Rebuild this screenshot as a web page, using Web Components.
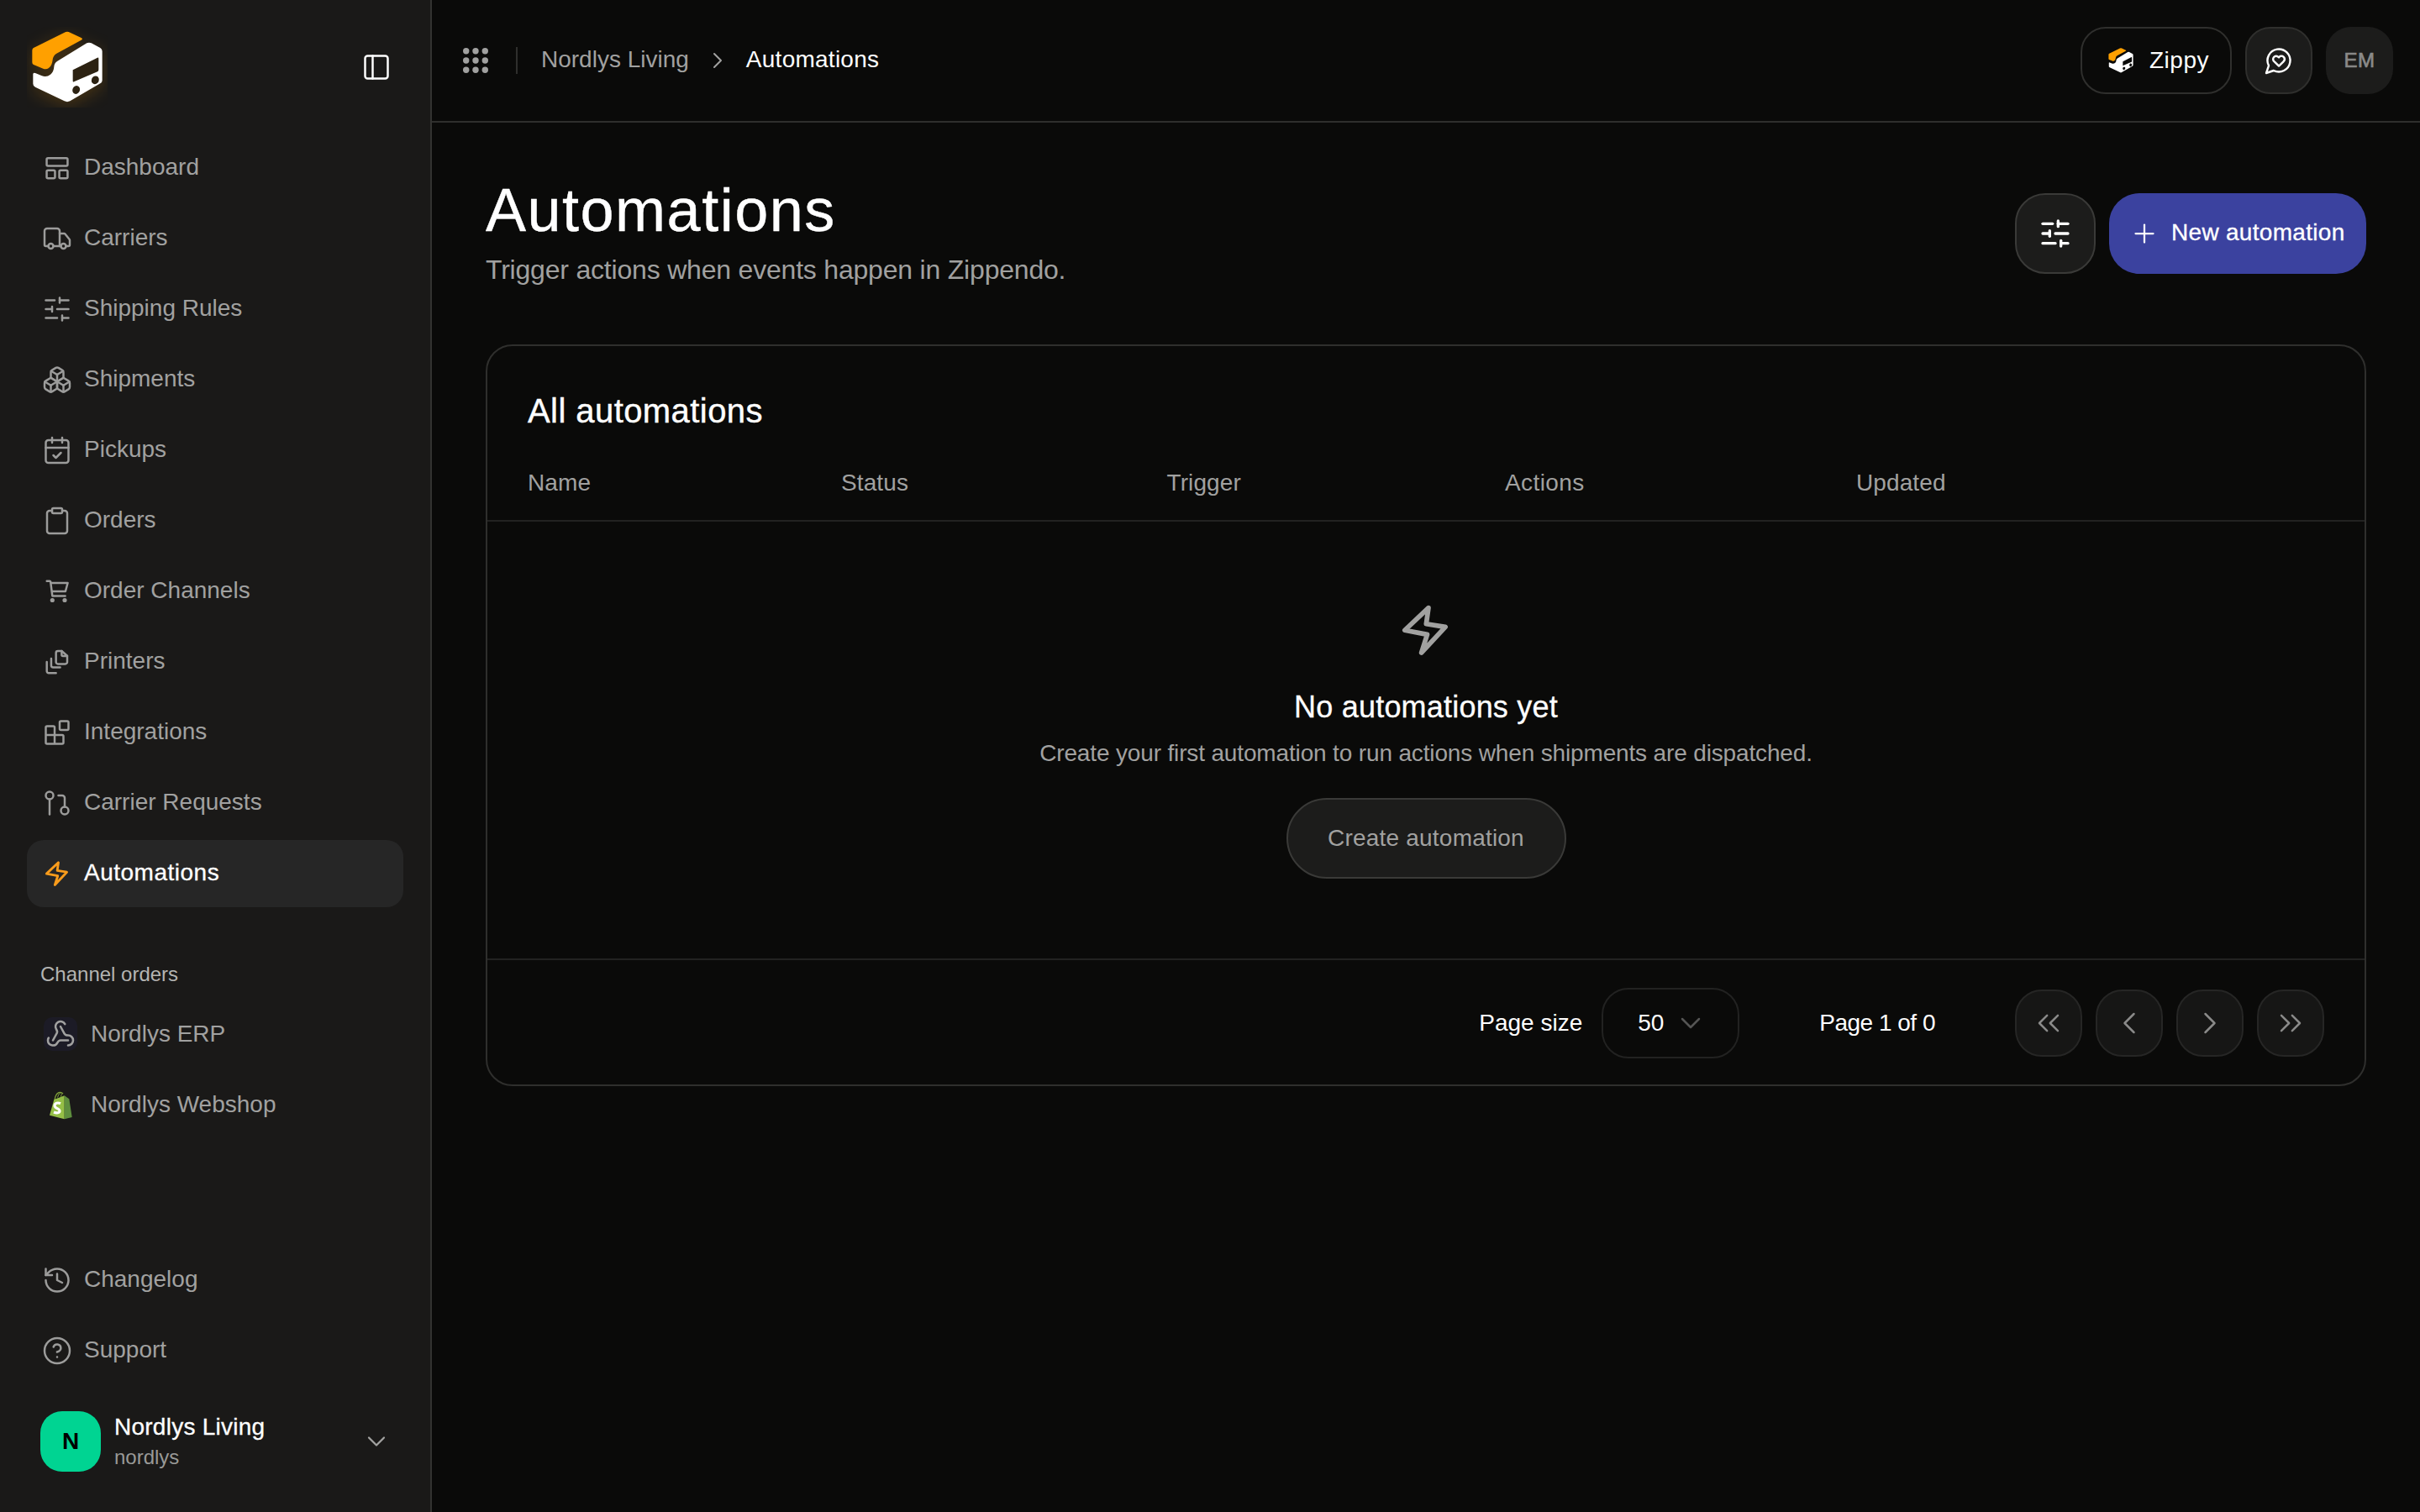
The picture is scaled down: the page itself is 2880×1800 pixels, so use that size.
<!DOCTYPE html>
<html lang="en"><head><meta charset="utf-8"><title>Automations</title>
<style>
html,body{margin:0;padding:0;background:#0a0a09;font-family:"Liberation Sans",Arial,sans-serif;color:#fff;height:100%;overflow:hidden}
</style></head><body>
<app-shell>
  <side-bar slot="side">
    <nav-item icon="dashboard">Dashboard</nav-item>
    <nav-item icon="truck">Carriers</nav-item>
    <nav-item icon="sliders">Shipping Rules</nav-item>
    <nav-item icon="boxes">Shipments</nav-item>
    <nav-item icon="calcheck">Pickups</nav-item>
    <nav-item icon="clipboard">Orders</nav-item>
    <nav-item icon="cart">Order Channels</nav-item>
    <nav-item icon="files">Printers</nav-item>
    <nav-item icon="blocks">Integrations</nav-item>
    <nav-item icon="pull">Carrier Requests</nav-item>
    <nav-item icon="bolt" active>Automations</nav-item>
    <channel-item slot="channels" kind="webhook">Nordlys ERP</channel-item>
    <channel-item slot="channels" kind="shopify">Nordlys Webshop</channel-item>
    <nav-item slot="bottom" icon="history">Changelog</nav-item>
    <nav-item slot="bottom" icon="help">Support</nav-item>
  </side-bar>
  <top-bar slot="top"></top-bar>
  <page-head slot="main"></page-head>
  <automation-card slot="main"></automation-card>
</app-shell>
<script>
const P={
dashboard:'<rect x="3.7" y="4.200" width="16.600" height="6.200" rx="1"/><rect x="3.7" y="13.800" width="6.600" height="6.400" rx="1"/><rect x="13.700" y="13.800" width="6.600" height="6.400" rx="1"/>',
truck:'<path d="M14 18V6a2 2 0 0 0-2-2H4a2 2 0 0 0-2 2v11a1 1 0 0 0 1 1h2"/><path d="M15 18H9"/><path d="M19 18h2a1 1 0 0 0 1-1v-3.650a1 1 0 0 0-.22-.624l-3.480-4.350A1 1 0 0 0 17.520 8H14"/><circle cx="17" cy="18" r="2"/><circle cx="7" cy="18" r="2"/>',
sliders:'<path d="M10 5H3"/><path d="M12 19H3"/><path d="M14 3v4"/><path d="M16 17v4"/><path d="M21 12h-9"/><path d="M21 19h-5"/><path d="M21 5h-7"/><path d="M8 10v4"/><path d="M8 12H3"/>',
boxes:'<path d="M2.970 12.920A2 2 0 0 0 2 14.630v3.240a2 2 0 0 0 .97 1.710l3 1.800a2 2 0 0 0 2.060 0L12 19v-5.500l-5-3-4.030 2.420Z"/><path d="m7 16.500-4.740-2.850"/><path d="m7 16.500 5-3"/><path d="M7 16.500v5.170"/><path d="M12 13.500V19l3.970 2.380a2 2 0 0 0 2.060 0l3-1.800a2 2 0 0 0 .97-1.710v-3.240a2 2 0 0 0-.97-1.710L17 10.500l-5 3Z"/><path d="m17 16.500-5-3"/><path d="m17 16.500 4.740-2.850"/><path d="M17 16.500v5.170"/><path d="M7.970 4.420A2 2 0 0 0 7 6.130v4.370l5 3 5-3V6.130a2 2 0 0 0-.97-1.710l-3-1.800a2 2 0 0 0-2.060 0l-3 1.800Z"/><path d="M12 8 7.260 5.150"/><path d="m12 8 4.740-2.850"/><path d="M12 13.500V8"/>',
calcheck:'<path d="M8 2v4"/><path d="M16 2v4"/><rect width="18" height="18" x="3" y="4" rx="2"/><path d="M3 10h18"/><path d="m9 16 2 2 4-4"/>',
clipboard:'<rect width="8" height="4" x="8" y="2" rx="1"/><path d="M16 4h2a2 2 0 0 1 2 2v14a2 2 0 0 1-2 2H6a2 2 0 0 1-2-2V6a2 2 0 0 1 2-2h2"/>',
cart:'<circle cx="8.200" cy="19" r=".9" fill="currentColor"/><circle cx="18" cy="19" r=".9" fill="currentColor"/><path d="M3.800 3.800H6a.8.8 0 0 1 .8.7L8.200 15.600H18.400"/><path d="M7.200 5.300H20.400L18.600 12H8"/>',
files:'<path d="M11.100 4.800a1.500 1.500 0 0 1 1.500-1.500h3L20 7.200v4.900a1.500 1.500 0 0 1-1.500 1.500h-5.900a1.500 1.500 0 0 1-1.500-1.500z"/><path d="M15.600 3.300v3a1 1 0 0 0 1 1H20"/><path d="M7.300 9.300v5.600a1.500 1.500 0 0 0 1.500 1.500h5.600"/><path d="M3.800 12v7.400a1.500 1.500 0 0 0 1.500 1.500h5.800"/>',
blocks:'<rect width="7" height="7" x="14" y="3" rx="1"/><path d="M10 21V8a1 1 0 0 0-1-1H4a1 1 0 0 0-1 1v12a1 1 0 0 0 1 1h12a1 1 0 0 0 1-1v-5a1 1 0 0 0-1-1H3"/>',
pull:'<circle cx="18" cy="18" r="3"/><circle cx="6" cy="6" r="3"/><path d="M13 6h3a2 2 0 0 1 2 2v7"/><path d="M6 9v12"/>',
bolt:'<path d="M13 3.200 3.600 12.100 12.500 13.800 10.200 21 19.700 10.800 12.100 9.600Z"/>',
history:'<path d="M3 12a9 9 0 1 0 9-9 9.750 9.750 0 0 0-6.740 2.740L3 8"/><path d="M3 3v5h5"/><path d="M12 7v5l4 2"/>',
help:'<circle cx="12" cy="12" r="10"/><path d="M9.090 9a3 3 0 0 1 5.830 1c0 2-3 3-3 3"/><path d="M12 17h.01"/>',
webhook:'<path d="M18 16.980h-5.990c-1.100 0-1.950.94-2.480 1.900A4 4 0 0 1 2 17c.01-.7.2-1.400.57-2"/><path d="m6 17 3.130-5.780c.53-.97.1-2.180-.5-3.100a4 4 0 1 1 6.890-4.060"/><path d="m12 6 3.130 5.730C15.660 12.700 16.900 13 18 13a4 4 0 0 1 0 8"/>',
panel:'<rect width="18" height="18" x="3" y="3" rx="2"/><path d="M9 3v18"/>',
down:'<path d="m6 9 6 6 6-6"/>',right:'<path d="m9 18 6-6-6-6"/>',left:'<path d="m15 18-6-6 6-6"/>',
dleft:'<path d="m11 17-5-5 5-5"/><path d="m18 17-5-5 5-5"/>',dright:'<path d="m6 17 5-5-5-5"/><path d="m13 17 5-5-5-5"/>',
plus:'<path d="M5 12h14"/><path d="M12 5v14"/>',
heart:'<path d="M7.900 20A9 9 0 1 0 4 16.100L2 22Z"/><path d="M15.800 9.200a2.500 2.500 0 0 0-3.500 0l-.3.4-.35-.3a2.420 2.420 0 1 0-3.200 3.600l3.600 3.500 3.600-3.500c1.200-1.200 1.100-2.700.2-3.700"/>'
};
const ic=(n,s,c='currentColor',w=1.65)=>`<svg width="${s}" height="${s}" viewBox="0 0 24 24" fill="none" stroke="${c}" stroke-width="${w}" stroke-linecap="round" stroke-linejoin="round" style="flex:none;display:block;color:${c}">${P[n]}</svg>`;
const logo=(s,dark='#2c2212')=>`<svg width="${s}" height="${s}" viewBox="0 0 360 360" style="flex:none;display:block"><path d="M66 108 170 56q10-5 20 0l40 19q8 4 0 8l-88 48q-12 7-14 22-2 22-14 30-9 6-20 2l-34-14q-5-2-5-8v-43q0-9 11-12z" fill="#ffa000"/><path d="M250 94q8-4 16 0l32 17q7 4 7 12v104q0 7-7 11L190 301q-10 5-20 0L66 251q-8-4-8-12v-34q0-7 8-4l22 9q18 7 32-4 12-9 13-28 1-14 12-20z" fill="#fff"/><path d="M200 190 288 146q4-2 4 3v40q0 5-4 7l-84 36q-4 2-4-3z" fill="${dark}"/><ellipse cx="212" cy="261" rx="13" ry="15" transform="rotate(25 212 261)" fill="${dark}"/><ellipse cx="280" cy="226" rx="13" ry="15" transform="rotate(25 280 226)" fill="${dark}"/></svg>`;
function def(name,html){
  class C extends HTMLElement{
    constructor(){super();const r=this.attachShadow({mode:'open'});const t=document.createElement('template');t.innerHTML=typeof html==='function'?html(this):html;r.appendChild(t.content.cloneNode(true));}
  }
  customElements.define(name,C);
}
def('app-shell',`<style>:host{display:grid;grid-template-columns:514px 1fr;grid-template-rows:146px 1fr;width:100%;height:1800px}
.s{grid-row:1/3;min-height:0;display:flex}.m{display:flex;flex-direction:column;padding:64px 64px 0;min-width:0}</style>
<div class="s"><slot name="side"></slot></div><div><slot name="top"></slot></div><div class="m"><slot name="main"></slot></div>`);
def('side-bar',()=>`<style>:host{display:flex;flex-direction:column;flex:1;box-sizing:border-box;background:#1a1918;border-right:2px solid #333331;padding:0 32px 48px}
.brand{height:160px;display:flex;align-items:center;justify-content:space-between;flex:none}
.logo{width:96px;height:96px;overflow:hidden}.logo svg{filter:drop-shadow(0 5px 10px rgba(255,160,0,.2));margin:-12px 0 0 -12px}
.t{margin-right:14px;color:#fff}
nav,.ch,.bot{display:flex;flex-direction:column;gap:4px}
.lab{margin:64px 0 15px 16px;font-size:24px;line-height:32px;color:#b4b4b2}
.sp{flex:1}.org{display:flex;align-items:center;gap:16px;padding-left:16px;margin-top:32px}
.av{width:72px;height:72px;border-radius:26px;background:#00d492;color:#000;display:flex;align-items:center;justify-content:center;font-weight:700;font-size:28px}
.n{font-size:28px;line-height:38px;color:#fff;-webkit-text-stroke:.3px #fff;letter-spacing:.25px}.u{font-size:24px;line-height:34px;color:#999997}
.c{margin-left:auto;margin-right:14px;color:#a3a3a1}</style>
<div class="brand"><div class="logo">${logo(120)}</div><div class="t">${ic('panel',36,'#fff')}</div></div>
<nav><slot></slot></nav><div class="lab">Channel orders</div><div class="ch"><slot name="channels"></slot></div><div class="sp"></div>
<div class="bot"><slot name="bottom"></slot></div>
<div class="org"><div class="av">N</div><div><div class="n">Nordlys Living</div><div class="u">nordlys</div></div><div class="c">${ic('down',36,'#a3a3a1',1.5)}</div></div>`);
def('nav-item',el=>{const a=el.hasAttribute('active');return `<style>:host{display:flex;align-items:center;gap:14px;height:80px;padding-left:18px;border-radius:20px;font-size:28px;color:${a?'#fff':'#a1a1a0'};background:${a?'#262626':'transparent'}${a?';-webkit-text-stroke:.3px #fff;letter-spacing:.5px':''}}span{padding-bottom:2px}</style>${ic(el.getAttribute('icon'),36,a?'#f99c1c':'#9c9c9b',a?1.9:1.65)}<span><slot></slot></span>`});
const shop=`<svg width="36" height="36" viewBox="0 0 36 36" style="display:block"><path d="M11 13q.8-7.500 5-9.300 3-1 5 1.500" fill="none" stroke="#7f9f3a" stroke-width="1.300"/><path d="M14.500 9.500q1-5 3.800-5.300M18.500 8.800q.3-3 1.500-3.800" fill="none" stroke="#7f9f3a" stroke-width="1"/><path d="M5 30.700 10.300 12l12.400-4.700v28z" fill="#95bf47"/><path d="M22.700 7.300l5.600 4 3.400 21.700-9 2.300z" fill="#5e8e3e"/><path d="M18 16.800c-3-1.500-7-.8-7 2.400 0 3.500 6 3.200 6 6.300 0 2.500-3.500 3-7 1.500" fill="none" stroke="#fff" stroke-width="3.200"/></svg>`;
def('channel-item',el=>{const k=el.getAttribute('kind');return `<style>:host{display:flex;align-items:center;gap:16px;height:80px;padding-left:20px;font-size:28px;color:#a1a1a0}
.b{width:40px;height:40px;border-radius:10px;display:flex;align-items:center;justify-content:center;background:${k==='webhook'?'#1c1b26':'transparent'}}</style>
<div class="b">${k==='webhook'?ic('webhook',36,'#a1a1a0',1.7):shop}</div><span><slot></slot></span>`});
def('top-bar',()=>`<style>:host{display:flex;align-items:center;box-sizing:border-box;height:146px;border-bottom:2px solid #2f2f2d;padding:0 32px}
.d{display:block;flex:none}.sep{width:2px;height:32px;background:#2f2f2d;margin:0 28px}
.bc{font-size:28px;color:#a1a1a0;padding-bottom:2px}.cur{font-size:28px;color:#fff;letter-spacing:.25px;padding-bottom:2px}.chev{margin:0 18px;color:#a1a1a0}
.r{margin-left:auto;display:flex;gap:16px}
.z,.h,.e{height:80px;box-sizing:border-box;border-radius:30px;display:flex;align-items:center;justify-content:center}
.z{width:180px;border:2px solid #2f2f2d;background:#0a0a09;gap:13px;font-size:28px;color:#fff;letter-spacing:.5px}
.h{width:80px;background:#1c1c1b;border:2px solid #2f2f2d}.e{width:80px;background:#1c1c1b;color:#8a8a89;font-size:24px;letter-spacing:.5px;-webkit-text-stroke:.7px #8a8a89}</style>
<svg class="d" width="40" height="40" viewBox="0 0 40 40" fill="#a1a1a0">${[8.7,20,31.300].map(y=>[8.7,20,31.300].map(x=>`<circle cx="${x}" cy="${y}" r="3.700"/>`).join('')).join('')}</svg>
<div class="sep"></div><span class="bc">Nordlys Living</span><span class="chev">${ic('right',32,'#a1a1a0',1.5)}</span><span class="cur">Automations</span>
<div class="r"><div class="z">${logo(42,'#0a0a09')}<span>Zippy</span></div><div class="h">${ic('heart',36,'#fff',1.6)}</div><div class="e">EM</div></div>`);
def('page-head',()=>`<style>:host{display:flex;justify-content:space-between;align-items:flex-start;height:136px;margin-bottom:64px;flex:none}
h1{margin:0;font-size:72px;line-height:80px;font-weight:400;letter-spacing:1.5px;color:#fff;-webkit-text-stroke:.4px #fff}p{margin:9px 0 0;font-size:32px;line-height:44px;color:#a1a1a0;letter-spacing:-.2px}
.r{display:flex;gap:16px;margin-top:20px}
.f{width:96px;height:96px;box-sizing:border-box;border-radius:36px;background:#1c1c1b;border:2px solid #3a3a38;display:flex;align-items:center;justify-content:center}
.n{height:96px;width:306px;box-sizing:border-box;border-radius:36px;background:#3b429f;display:flex;align-items:center;padding-left:24px;gap:14px;font-size:28px;color:#fff;-webkit-text-stroke:.3px #fff;letter-spacing:.3px}.n span{padding-bottom:2px}</style>
<div><h1>Automations</h1><p>Trigger actions when events happen in Zippendo.</p></div>
<div class="r"><div class="f">${ic('sliders',40,'#fff',2)}</div><div class="n">${ic('plus',36,'#fff',1.5)}<span>New automation</span></div></div>`);
def('automation-card',()=>`<style>:host{display:flex;flex-direction:column;height:883px;box-sizing:border-box;border:2px solid #2f2f2d;border-radius:32px;flex:none}
h2{margin:49px 0 0 48px;font-size:40px;line-height:56px;font-weight:400;color:#fff;-webkit-text-stroke:.4px #fff;letter-spacing:.43px}
.th{display:grid;grid-template-columns:373px 387.500px 402.500px 418px 1fr;padding:27px 48px 0;box-sizing:border-box;line-height:62px;font-size:28px;color:#a1a1a0;border-bottom:2px solid #222221;height:104px;letter-spacing:.1px;flex:none}
.th .a{letter-spacing:.4px}
.em{flex:1;display:flex;flex-direction:column;align-items:center;padding-top:93px;color:#a1a1a0}
.t{margin-top:32px;font-size:36px;line-height:48px;color:#fff;-webkit-text-stroke:.3px #fff;letter-spacing:.2px}.d{margin-top:11px;font-size:28px;line-height:40px;letter-spacing:-.15px}
.b{margin-top:33px;height:96px;width:333px;box-sizing:border-box;border-radius:48px;background:#1c1c1b;border:2px solid #3a3a38;display:flex;align-items:center;justify-content:center;font-size:28px;letter-spacing:.2px}
.ft{height:150px;box-sizing:border-box;border-top:2px solid #222221;display:flex;align-items:center;justify-content:flex-end;padding:1px 48px 0 0;font-size:28px;color:#fff;flex:none}
.sel{width:164px;height:84px;box-sizing:border-box;margin-left:23px;border:2px solid #222221;border-radius:32px;display:flex;align-items:center;padding-left:41px;gap:12px;color:#fff}
.pg{margin-left:95px;margin-right:95px;letter-spacing:-.5px}.bs{display:flex;gap:16px}
.p{width:80px;height:80px;box-sizing:border-box;border-radius:32px;background:#161615;border:2px solid #262625;display:flex;align-items:center;justify-content:center}</style>
<h2>All automations</h2>
<div class="th"><span>Name</span><span>Status</span><span>Trigger</span><span class="a">Actions</span><span>Updated</span></div>
<div class="em">${ic('bolt',72,'#a1a1a0',1.9)}<div class="t">No automations yet</div><div class="d">Create your first automation to run actions when shipments are dispatched.</div><div class="b">Create automation</div></div>
<div class="ft"><span>Page size</span><div class="sel"><span>50</span>${ic('down',40,'#555554',1.5)}</div><span class="pg">Page 1 of 0</span>
<div class="bs">${['dleft','left','right','dright'].map(n=>`<div class="p">${ic(n,44,'#8a8a89',1.35)}</div>`).join('')}</div></div>`);
</script>
</body></html>
